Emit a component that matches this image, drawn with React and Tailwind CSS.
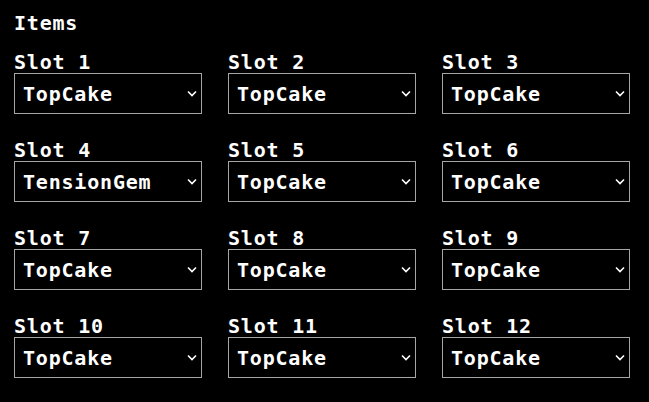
import React from "react";

const slots = [
  "TopCake","TopCake","TopCake",
  "TensionGem","TopCake","TopCake",
  "TopCake","TopCake","TopCake",
  "TopCake","TopCake","TopCake",
];

function Chevron() {
  return (
    <svg className="pointer-events-none absolute right-[5px] top-[17px]" width="10" height="7" viewBox="0 0 10 7">
      <path d="M1 1.5 L5 5.5 L9 1.5" fill="none" stroke="#ffffff" strokeWidth="1.6" />
    </svg>
  );
}

export default function App() {
  return (
    <div className="min-h-[402px] w-[649px] bg-black text-white pl-[14px] pt-[13px]" style={{ fontFamily: '"DejaVu Sans Mono", "Liberation Mono", monospace' }}>
      <div className="text-[20px] leading-[20px] font-bold tracking-[0.8px]">Items</div>
      <div className="mt-[19px] grid grid-cols-[188px_188px_188px] gap-x-[26px] gap-y-[26px]">
        {slots.map((v, i) => (
          <div key={i} className="flex flex-col">
            <div className="text-[20px] leading-[20px] font-bold tracking-[0.8px]">Slot {i + 1}</div>
            <div className="relative mt-[1px]">
              <select
                defaultValue={v}
                className="block h-[41px] w-[188px] appearance-none border border-[#a6a6a6] bg-black pl-[8px] text-[20px] font-bold tracking-[0.8px] text-white outline-none"
                style={{ fontFamily: '"DejaVu Sans Mono", "Liberation Mono", monospace' }}
              >
                <option value="TopCake">TopCake</option>
                <option value="TensionGem">TensionGem</option>
              </select>
              <Chevron />
            </div>
          </div>
        ))}
      </div>
    </div>
  );
}
